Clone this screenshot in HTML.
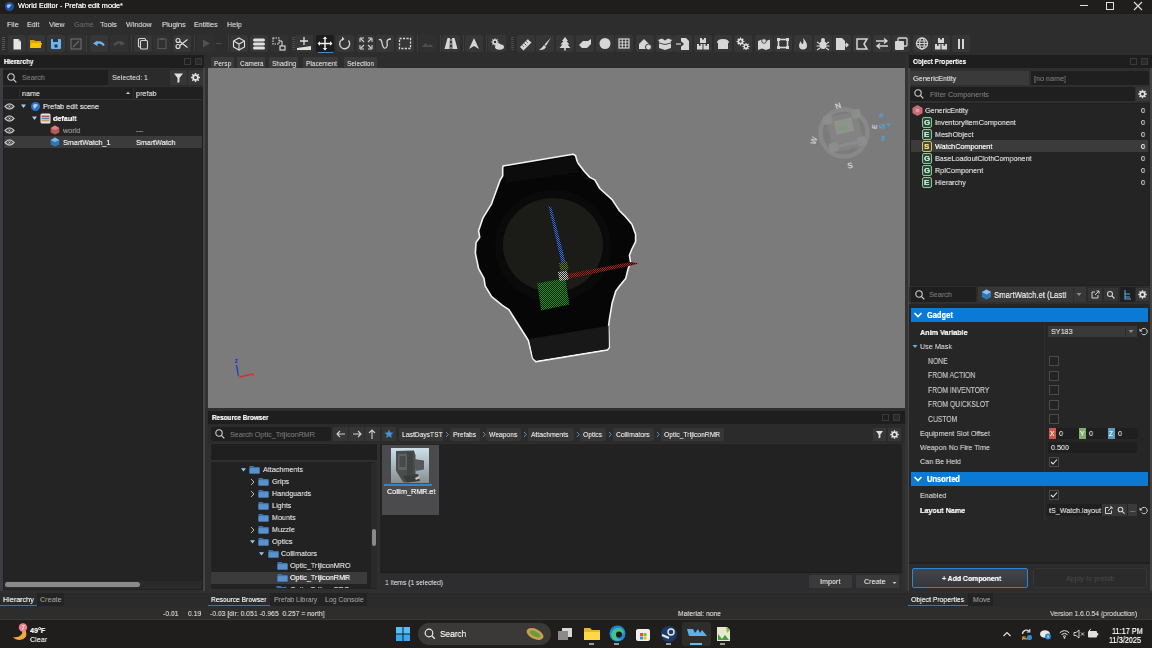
<!DOCTYPE html>
<html><head><meta charset="utf-8">
<style>
*{margin:0;padding:0;box-sizing:border-box}
html,body{width:1152px;height:648px;overflow:hidden;background:#2b2b2b;font-family:"Liberation Sans",sans-serif;font-size:8px;color:#cfcfcf}
.a{position:absolute}
.t{position:absolute;white-space:nowrap;line-height:1;transform-origin:0 0;will-change:transform;text-shadow:0 0 0.4px currentColor}
</style></head>
<body>
<div class="a" style="left:0px;top:0px;width:1152px;height:14px;background:#1f1e1d;"></div>
<div class="a" style="left:0px;top:14px;width:1152px;height:41px;background:#2d2d2d;"></div>
<svg class="a" style="left:4px;top:1px;" width="11" height="11" viewBox="0 0 11 11"><circle cx="5.5" cy="5.5" r="4.6" fill="#1f4f9a"/><path d="M2.5 4.5 Q5 2.5 7.5 4 Q6 6 4 7.5 Z" fill="#9cc4f0"/></svg>
<div class="t" style="left:18px;top:2px;font-size:7.3px;color:#f2f2f2;font-weight:normal;">World Editor - Prefab edit mode*</div>
<div class="a" style="left:1080px;top:5px;width:8px;height:1px;background:#e0e0e0;"></div>
<div class="a" style="left:1106px;top:2px;width:8px;height:8px;background:transparent;border:1px solid #e0e0e0"></div>
<svg class="a" style="left:1133px;top:1px;" width="10" height="10" viewBox="0 0 10 10"><path d="M1 1 L9 9 M9 1 L1 9" stroke="#e0e0e0" stroke-width="1.1"/></svg>
<div class="t" style="left:7px;top:21px;font-size:8px;color:#c4c4c4;font-weight:normal;transform:scaleX(0.9);">File</div>
<div class="t" style="left:27px;top:21px;font-size:8px;color:#c4c4c4;font-weight:normal;transform:scaleX(0.9);">Edit</div>
<div class="t" style="left:49px;top:21px;font-size:8px;color:#c4c4c4;font-weight:normal;transform:scaleX(0.9);">View</div>
<div class="t" style="left:74px;top:21px;font-size:8px;color:#5e5e5e;font-weight:normal;transform:scaleX(0.9);">Game</div>
<div class="t" style="left:100px;top:21px;font-size:8px;color:#c4c4c4;font-weight:normal;transform:scaleX(0.9);">Tools</div>
<div class="t" style="left:126px;top:21px;font-size:8px;color:#c4c4c4;font-weight:normal;transform:scaleX(0.9);">Window</div>
<div class="t" style="left:162px;top:21px;font-size:8px;color:#c4c4c4;font-weight:normal;transform:scaleX(0.9);">Plugins</div>
<div class="t" style="left:194px;top:21px;font-size:8px;color:#c4c4c4;font-weight:normal;transform:scaleX(0.9);">Entities</div>
<div class="t" style="left:227px;top:21px;font-size:8px;color:#c4c4c4;font-weight:normal;transform:scaleX(0.9);">Help</div>
<div class="a" style="left:2px;top:37px;width:3px;height:1px;background:#555;"></div>
<div class="a" style="left:2px;top:39px;width:3px;height:1px;background:#555;"></div>
<div class="a" style="left:2px;top:41px;width:3px;height:1px;background:#555;"></div>
<div class="a" style="left:2px;top:43px;width:3px;height:1px;background:#555;"></div>
<div class="a" style="left:2px;top:45px;width:3px;height:1px;background:#555;"></div>
<div class="a" style="left:2px;top:47px;width:3px;height:1px;background:#555;"></div>
<div class="a" style="left:2px;top:49px;width:3px;height:1px;background:#555;"></div>
<div class="a" style="left:8px;top:35px;width:18px;height:17px;background:#363636;border-radius:2px"></div>
<svg class="a" style="left:8px;top:35px;" width="18" height="17" viewBox="0 0 18 17"><path d="M5.5 4h5l2.5 2.5v8h-7.5z" fill="#e6e6e6"/><path d="M10.5 4v2.5h2.5z" fill="#aaa"/></svg>
<div class="a" style="left:27px;top:35px;width:18px;height:17px;background:#363636;border-radius:2px"></div>
<svg class="a" style="left:27px;top:35px;" width="18" height="17" viewBox="0 0 18 17"><path d="M3 5h4l1 1h6v7H3z" fill="#d9a400"/><path d="M4 8h11l-1.5 5H3z" fill="#f5c400"/></svg>
<div class="a" style="left:47px;top:35px;width:18px;height:17px;background:#363636;border-radius:2px"></div>
<svg class="a" style="left:47px;top:35px;" width="18" height="17" viewBox="0 0 18 17"><rect x="4" y="4" width="10" height="10" rx="1" fill="#6fb4ee"/><rect x="6" y="4" width="5" height="3" fill="#1f3550"/><rect x="7.5" y="9.5" width="3" height="3" fill="#1f3550"/></svg>
<div class="a" style="left:67px;top:35px;width:18px;height:17px;background:#313131;border-radius:2px"></div>
<svg class="a" style="left:67px;top:35px;" width="18" height="17" viewBox="0 0 18 17"><rect x="4" y="4" width="10" height="10" fill="none" stroke="#6a6a6a" stroke-width="1.2"/><path d="M6 12L12 6" stroke="#6a6a6a" stroke-width="1.2"/></svg>
<div class="a" style="left:86px;top:35px;width:1px;height:17px;background:#3c3c3c;"></div>
<div class="a" style="left:90px;top:35px;width:18px;height:17px;background:#363636;border-radius:2px"></div>
<svg class="a" style="left:90px;top:35px;" width="18" height="17" viewBox="0 0 18 17"><path d="M6 8.5Q10.5 5.5 14 10.5" fill="none" stroke="#6fb4ee" stroke-width="2"/><path d="M3 8.5L7.5 5.5L7.5 11z" fill="#6fb4ee"/></svg>
<div class="a" style="left:110px;top:35px;width:18px;height:17px;background:#313131;border-radius:2px"></div>
<svg class="a" style="left:110px;top:35px;" width="18" height="17" viewBox="0 0 18 17"><path d="M12 8.5Q7.5 5.5 4 10.5" fill="none" stroke="#505050" stroke-width="2"/><path d="M15 8.5L10.5 5.5L10.5 11z" fill="#505050"/></svg>
<div class="a" style="left:131px;top:35px;width:1px;height:17px;background:#3c3c3c;"></div>
<div class="a" style="left:134px;top:35px;width:18px;height:17px;background:#363636;border-radius:2px"></div>
<svg class="a" style="left:134px;top:35px;" width="18" height="17" viewBox="0 0 18 17"><rect x="4.5" y="3.5" width="7" height="8.5" rx="1" fill="none" stroke="#d6d6d6" stroke-width="1.1"/><rect x="6.5" y="5.5" width="7" height="8.5" rx="1" fill="#363636" stroke="#d6d6d6" stroke-width="1.1"/></svg>
<div class="a" style="left:153px;top:35px;width:18px;height:17px;background:#313131;border-radius:2px"></div>
<svg class="a" style="left:153px;top:35px;" width="18" height="17" viewBox="0 0 18 17"><rect x="5" y="4" width="8" height="9.5" fill="none" stroke="#555" stroke-width="1.2"/><rect x="7" y="3" width="4" height="2" fill="#555"/></svg>
<div class="a" style="left:173px;top:35px;width:18px;height:17px;background:#363636;border-radius:2px"></div>
<svg class="a" style="left:173px;top:35px;" width="18" height="17" viewBox="0 0 18 17"><circle cx="5" cy="5.5" r="2" fill="none" stroke="#e0e0e0" stroke-width="1.1"/><circle cx="5" cy="11.5" r="2" fill="none" stroke="#e0e0e0" stroke-width="1.1"/><path d="M6.8 6.5L14.5 12.5M6.8 10.5L14.5 4.5" stroke="#e0e0e0" stroke-width="1.1"/></svg>
<div class="a" style="left:194px;top:35px;width:1px;height:17px;background:#3c3c3c;"></div>
<div class="a" style="left:197px;top:35px;width:18px;height:17px;background:#303030;border-radius:2px"></div>
<svg class="a" style="left:197px;top:35px;" width="18" height="17" viewBox="0 0 18 17"><path d="M6 4.5l7 4l-7 4z" fill="#505050"/></svg>
<div class="a" style="left:216px;top:43px;width:5px;height:1px;background:#505050;"></div>
<div class="a" style="left:228px;top:35px;width:1px;height:17px;background:#3c3c3c;"></div>
<div class="a" style="left:230px;top:35px;width:18px;height:17px;background:#363636;border-radius:2px"></div>
<svg class="a" style="left:230px;top:35px;" width="18" height="17" viewBox="0 0 18 17"><path d="M9 3l5.5 3v6L9 15l-5.5-3V6z M3.5 6L9 9l5.5-3 M9 9v6" fill="none" stroke="#e0e0e0" stroke-width="1.1"/></svg>
<div class="a" style="left:250px;top:35px;width:18px;height:17px;background:#363636;border-radius:2px"></div>
<svg class="a" style="left:250px;top:35px;" width="18" height="17" viewBox="0 0 18 17"><rect x="3" y="3.5" width="12" height="3" rx="1.5" fill="#e0e0e0"/><rect x="3" y="7.5" width="12" height="3" rx="1.5" fill="#e0e0e0"/><rect x="3" y="11.5" width="12" height="3" rx="1.5" fill="#e0e0e0"/></svg>
<div class="a" style="left:270px;top:35px;width:18px;height:17px;background:#313131;border-radius:2px"></div>
<svg class="a" style="left:270px;top:35px;" width="18" height="17" viewBox="0 0 18 17"><rect x="3" y="3" width="6" height="6" fill="none" stroke="#e0e0e0" stroke-width="1.1" stroke-dasharray="1.5 1"/><path d="M9 6h3v5" stroke="#e0e0e0" stroke-width="1" fill="none"/><rect x="10" y="11" width="5" height="4" fill="none" stroke="#e0e0e0" stroke-width="1.1"/></svg>
<div class="a" style="left:292px;top:37px;width:3px;height:1px;background:#4a4a4a;"></div>
<div class="a" style="left:292px;top:39px;width:3px;height:1px;background:#4a4a4a;"></div>
<div class="a" style="left:292px;top:41px;width:3px;height:1px;background:#4a4a4a;"></div>
<div class="a" style="left:292px;top:43px;width:3px;height:1px;background:#4a4a4a;"></div>
<div class="a" style="left:292px;top:45px;width:3px;height:1px;background:#4a4a4a;"></div>
<div class="a" style="left:292px;top:47px;width:3px;height:1px;background:#4a4a4a;"></div>
<div class="a" style="left:292px;top:49px;width:3px;height:1px;background:#4a4a4a;"></div>
<div class="a" style="left:295px;top:35px;width:18px;height:17px;background:#363636;border-radius:2px"></div>
<svg class="a" style="left:295px;top:35px;" width="18" height="17" viewBox="0 0 18 17"><path d="M9 2v8M5 6h8" stroke="#e0e0e0" stroke-width="1.3"/><path d="M2 13 L16 11 L16 15 L2 15z" fill="#e0e0e0"/></svg>
<div class="a" style="left:316px;top:35px;width:18px;height:17px;background:#1c1c1c;border-radius:2px"></div>
<svg class="a" style="left:316px;top:35px;" width="18" height="17" viewBox="0 0 18 17"><path d="M9 2v13M2.5 8.5h13" stroke="#f0f0f0" stroke-width="1.4"/><path d="M9 1.5l-2.2 2.5h4.4zM9 15.5l-2.2-2.5h4.4zM1.5 8.5l2.5-2.2v4.4zM16.5 8.5l-2.5-2.2v4.4z" fill="#f0f0f0"/></svg>
<div class="a" style="left:318px;top:52px;width:15px;height:1px;background:#3d8fd6;"></div>
<div class="a" style="left:336px;top:35px;width:18px;height:17px;background:#363636;border-radius:2px"></div>
<svg class="a" style="left:336px;top:35px;" width="18" height="17" viewBox="0 0 18 17"><path d="M12.5 5.5 A5 5 0 1 1 7 4" fill="none" stroke="#d6d6d6" stroke-width="1.3"/><path d="M6 1.5l2.5 2.5l-2.5 2z" fill="#d6d6d6"/></svg>
<div class="a" style="left:357px;top:35px;width:18px;height:17px;background:#363636;border-radius:2px"></div>
<svg class="a" style="left:357px;top:35px;" width="18" height="17" viewBox="0 0 18 17"><path d="M3 3h4M3 3v4M15 3h-4M15 3v4M3 14h4M3 14v-4M15 14h-4M15 14v-4M4 4l3 3M14 4l-3 3M4 13l3-3M14 13l-3-3" stroke="#d6d6d6" stroke-width="1.1" fill="none"/></svg>
<div class="a" style="left:376px;top:35px;width:18px;height:17px;background:#363636;border-radius:2px"></div>
<svg class="a" style="left:376px;top:35px;" width="18" height="17" viewBox="0 0 18 17"><path d="M3 5 Q5 3 6 8 Q7 14 9.5 13 Q12 12 11 7 Q11 4 15 4" fill="none" stroke="#d6d6d6" stroke-width="1.3"/></svg>
<div class="a" style="left:396px;top:35px;width:18px;height:17px;background:#363636;border-radius:2px"></div>
<svg class="a" style="left:396px;top:35px;" width="18" height="17" viewBox="0 0 18 17"><rect x="3.5" y="3.5" width="11" height="10" fill="none" stroke="#d6d6d6" stroke-width="1.3" stroke-dasharray="2.2 1.3"/></svg>
<div class="a" style="left:417px;top:35px;width:1px;height:17px;background:#3c3c3c;"></div>
<div class="a" style="left:419px;top:35px;width:18px;height:17px;background:#303030;border-radius:2px"></div>
<svg class="a" style="left:419px;top:35px;" width="18" height="17" viewBox="0 0 18 17"><path d="M3 12l3.5-4l2.5 3l2-2l3.5 3z" fill="#505050"/></svg>
<div class="a" style="left:440px;top:35px;width:1px;height:17px;background:#3c3c3c;"></div>
<div class="a" style="left:442px;top:35px;width:18px;height:17px;background:#363636;border-radius:2px"></div>
<svg class="a" style="left:442px;top:35px;" width="18" height="17" viewBox="0 0 18 17"><path d="M5.5 3h2.5l-0.5 11H2.5z M10 3h2.5l3 11h-5z" fill="#d6d6d6"/><path d="M9 4v2M9 8v2M9 12v2" stroke="#d6d6d6" stroke-width="0.9"/></svg>
<div class="a" style="left:463px;top:35px;width:1px;height:17px;background:#3c3c3c;"></div>
<div class="a" style="left:465px;top:35px;width:18px;height:17px;background:#363636;border-radius:2px"></div>
<svg class="a" style="left:465px;top:35px;" width="18" height="17" viewBox="0 0 18 17"><path d="M9 3l5 11l-5-3l-5 3z" fill="#d6d6d6"/></svg>
<div class="a" style="left:486px;top:35px;width:1px;height:17px;background:#3c3c3c;"></div>
<div class="a" style="left:488px;top:35px;width:18px;height:17px;background:#363636;border-radius:2px"></div>
<svg class="a" style="left:488px;top:35px;" width="18" height="17" viewBox="0 0 18 17"><path d="M9.53 6.39 L10.56 6.46 L10.56 7.54 L9.53 7.61 L9.22 8.35 L9.90 9.13 L9.13 9.90 L8.35 9.22 L7.61 9.53 L7.54 10.56 L6.46 10.56 L6.39 9.53 L5.65 9.22 L4.87 9.90 L4.10 9.13 L4.78 8.35 L4.47 7.61 L3.44 7.54 L3.44 6.46 L4.47 6.39 L4.78 5.65 L4.10 4.87 L4.87 4.10 L5.65 4.78 L6.39 4.47 L6.46 3.44 L7.54 3.44 L7.61 4.47 L8.35 4.78 L9.13 4.10 L9.90 4.87 L9.22 5.65Z" fill="#e0e0e0"/><circle cx="7" cy="7" r="1.3" fill="#363636"/><ellipse cx="11.5" cy="12" rx="4.5" ry="2.8" fill="#d6d6d6"/><circle cx="10" cy="10.5" r="2.5" fill="#d6d6d6"/></svg>
<div class="a" style="left:511px;top:37px;width:3px;height:1px;background:#4a4a4a;"></div>
<div class="a" style="left:511px;top:39px;width:3px;height:1px;background:#4a4a4a;"></div>
<div class="a" style="left:511px;top:41px;width:3px;height:1px;background:#4a4a4a;"></div>
<div class="a" style="left:511px;top:43px;width:3px;height:1px;background:#4a4a4a;"></div>
<div class="a" style="left:511px;top:45px;width:3px;height:1px;background:#4a4a4a;"></div>
<div class="a" style="left:511px;top:47px;width:3px;height:1px;background:#4a4a4a;"></div>
<div class="a" style="left:511px;top:49px;width:3px;height:1px;background:#4a4a4a;"></div>
<div class="a" style="left:517px;top:35px;width:18px;height:17px;background:#363636;border-radius:2px"></div>
<svg class="a" style="left:517px;top:35px;" width="18" height="17" viewBox="0 0 18 17"><path d="M3 12l8-8l3.5 3.5l-8 8z" fill="#d6d6d6"/><path d="M5.5 10.5l1.2 1.2M7.5 8.5l1.8 1.8M9.5 6.5l1.2 1.2M11.5 4.5l1.8 1.8" stroke="#363636" stroke-width="0.9"/></svg>
<div class="a" style="left:536px;top:35px;width:18px;height:17px;background:#363636;border-radius:2px"></div>
<svg class="a" style="left:536px;top:35px;" width="18" height="17" viewBox="0 0 18 17"><path d="M15 2.5l-6.5 7l1.5 1.5z" fill="#d6d6d6"/><path d="M8 10l2 2Q8.5 15.5 3 15Q5.5 13.5 8 10" fill="#d6d6d6"/></svg>
<div class="a" style="left:556px;top:35px;width:18px;height:17px;background:#363636;border-radius:2px"></div>
<svg class="a" style="left:556px;top:35px;" width="18" height="17" viewBox="0 0 18 17"><path d="M9 2l3 4h-1.5l3 3.5h-2l3 3.5h-11l3-3.5h-2l3-3.5h-1.5z" fill="#d6d6d6"/><rect x="8.2" y="13" width="1.6" height="2.5" fill="#d6d6d6"/></svg>
<div class="a" style="left:576px;top:35px;width:18px;height:17px;background:#363636;border-radius:2px"></div>
<svg class="a" style="left:576px;top:35px;" width="18" height="17" viewBox="0 0 18 17"><path d="M3 10l4-4h5l3-2v5l-4 4H6z" fill="#d6d6d6"/></svg>
<div class="a" style="left:596px;top:35px;width:18px;height:17px;background:#363636;border-radius:2px"></div>
<svg class="a" style="left:596px;top:35px;" width="18" height="17" viewBox="0 0 18 17"><circle cx="9" cy="8.5" r="5.5" fill="#d6d6d6"/></svg>
<div class="a" style="left:615px;top:35px;width:18px;height:17px;background:#363636;border-radius:2px"></div>
<svg class="a" style="left:615px;top:35px;" width="18" height="17" viewBox="0 0 18 17"><rect x="4" y="4" width="10" height="9" fill="none" stroke="#d6d6d6" stroke-width="1.2"/><path d="M7.3 4v9M10.7 4v9M4 7h10M4 10h10" stroke="#d6d6d6" stroke-width="1"/></svg>
<div class="a" style="left:636px;top:35px;width:18px;height:17px;background:#363636;border-radius:2px"></div>
<svg class="a" style="left:636px;top:35px;" width="18" height="17" viewBox="0 0 18 17"><path d="M3 9l5-5l5 5v5H3z" fill="#d6d6d6"/><circle cx="12.5" cy="12" r="3" fill="#d6d6d6" stroke="#363636" stroke-width="1"/></svg>
<div class="a" style="left:656px;top:35px;width:18px;height:17px;background:#363636;border-radius:2px"></div>
<svg class="a" style="left:656px;top:35px;" width="18" height="17" viewBox="0 0 18 17"><path d="M3 7h12v6l-6 2l-6-2z" fill="#d6d6d6"/><path d="M2 5l4-1.5l3 2l3-2l4 1.5l-2 2.5h-10z" fill="#d6d6d6"/><path d="M3 8l6 1.5l6-1.5" stroke="#363636" stroke-width="0.9" fill="none"/></svg>
<div class="a" style="left:674px;top:35px;width:18px;height:17px;background:#363636;border-radius:2px"></div>
<svg class="a" style="left:674px;top:35px;" width="18" height="17" viewBox="0 0 18 17"><path d="M7 3h5l3 3v9H7z" fill="#d6d6d6"/><path d="M2 9h7M7 7l2 2l-2 2" stroke="#363636" stroke-width="1.4" fill="none"/><path d="M2 9h5" stroke="#d6d6d6" stroke-width="1.2"/></svg>
<div class="a" style="left:694px;top:35px;width:18px;height:17px;background:#363636;border-radius:2px"></div>
<svg class="a" style="left:694px;top:35px;" width="18" height="17" viewBox="0 0 18 17"><rect x="6" y="3" width="6" height="5" fill="#d6d6d6"/><rect x="8" y="2" width="2" height="2.5" fill="#363636"/><rect x="3" y="9" width="5.5" height="5.5" fill="#d6d6d6"/><rect x="5" y="8.5" width="1.6" height="2.3" fill="#363636"/><rect x="9.5" y="9" width="5.5" height="5.5" fill="#d6d6d6"/><rect x="11.5" y="8.5" width="1.6" height="2.3" fill="#363636"/></svg>
<div class="a" style="left:714px;top:35px;width:18px;height:17px;background:#363636;border-radius:2px"></div>
<svg class="a" style="left:714px;top:35px;" width="18" height="17" viewBox="0 0 18 17"><path d="M3 8Q3 4 9 4Q15 4 15 8L14 8v6H4V8z" fill="#d6d6d6"/></svg>
<div class="a" style="left:734px;top:35px;width:18px;height:17px;background:#363636;border-radius:2px"></div>
<svg class="a" style="left:734px;top:35px;" width="18" height="17" viewBox="0 0 18 17"><path d="M9.22 5.84 L10.45 5.90 L10.45 7.10 L9.22 7.16 L8.89 7.96 L9.72 8.87 L8.87 9.72 L7.96 8.89 L7.16 9.22 L7.10 10.45 L5.90 10.45 L5.84 9.22 L5.04 8.89 L4.13 9.72 L3.28 8.87 L4.11 7.96 L3.78 7.16 L2.55 7.10 L2.55 5.90 L3.78 5.84 L4.11 5.04 L3.28 4.13 L4.13 3.28 L5.04 4.11 L5.84 3.78 L5.90 2.55 L7.10 2.55 L7.16 3.78 L7.96 4.11 L8.87 3.28 L9.72 4.13 L8.89 5.04Z" fill="#e0e0e0"/><circle cx="6.5" cy="6.5" r="1.2" fill="#363636"/><path d="M14.43 10.91 L15.56 10.96 L15.56 12.04 L14.43 12.09 L14.13 12.80 L14.90 13.63 L14.13 14.40 L13.30 13.63 L12.59 13.93 L12.54 15.06 L11.46 15.06 L11.41 13.93 L10.70 13.63 L9.87 14.40 L9.10 13.63 L9.87 12.80 L9.57 12.09 L8.44 12.04 L8.44 10.96 L9.57 10.91 L9.87 10.20 L9.10 9.37 L9.87 8.60 L10.70 9.37 L11.41 9.07 L11.46 7.94 L12.54 7.94 L12.59 9.07 L13.30 9.37 L14.13 8.60 L14.90 9.37 L14.13 10.20Z" fill="#e0e0e0"/><circle cx="12" cy="11.5" r="1.1" fill="#363636"/></svg>
<div class="a" style="left:755px;top:35px;width:18px;height:17px;background:#363636;border-radius:2px"></div>
<svg class="a" style="left:755px;top:35px;" width="18" height="17" viewBox="0 0 18 17"><path d="M3 6l4-1.5l4 1.5l4-1.5v9l-4 1.5l-4-1.5l-4 1.5z" fill="#d6d6d6"/><circle cx="9" cy="6" r="2.3" fill="#d6d6d6" stroke="#363636" stroke-width="0.8"/></svg>
<div class="a" style="left:774px;top:35px;width:18px;height:17px;background:#363636;border-radius:2px"></div>
<svg class="a" style="left:774px;top:35px;" width="18" height="17" viewBox="0 0 18 17"><rect x="4.5" y="4.5" width="9" height="8" fill="none" stroke="#d6d6d6" stroke-width="1.6"/><rect x="3" y="3" width="3" height="3" fill="#d6d6d6"/><rect x="12" y="3" width="3" height="3" fill="#d6d6d6"/><rect x="3" y="11" width="3" height="3" fill="#d6d6d6"/><rect x="12" y="11" width="3" height="3" fill="#d6d6d6"/></svg>
<div class="a" style="left:794px;top:35px;width:18px;height:17px;background:#363636;border-radius:2px"></div>
<svg class="a" style="left:794px;top:35px;" width="18" height="17" viewBox="0 0 18 17"><path d="M9 3Q13 7 13 10.5A4 4 0 0 1 5 10.5Q5 8 7 6Q7 9 9 9Q10 6 9 3z" fill="#d6d6d6"/></svg>
<div class="a" style="left:814px;top:35px;width:18px;height:17px;background:#363636;border-radius:2px"></div>
<svg class="a" style="left:814px;top:35px;" width="18" height="17" viewBox="0 0 18 17"><ellipse cx="9" cy="10" rx="3.5" ry="4" fill="#d6d6d6"/><circle cx="9" cy="5" r="2" fill="#d6d6d6"/><path d="M3 7l3 2M15 7l-3 2M2.5 11h4M15.5 11h-4M3 15l3-2M15 15l-3-2" stroke="#d6d6d6" stroke-width="1.1"/></svg>
<div class="a" style="left:833px;top:35px;width:18px;height:17px;background:#363636;border-radius:2px"></div>
<svg class="a" style="left:833px;top:35px;" width="18" height="17" viewBox="0 0 18 17"><path d="M3 3h6l3 3v9H3z" fill="#d6d6d6"/><path d="M9 10h6M13 8l2 2l-2 2" stroke="#d6d6d6" stroke-width="1.3" fill="none"/></svg>
<div class="a" style="left:853px;top:35px;width:18px;height:17px;background:#363636;border-radius:2px"></div>
<svg class="a" style="left:853px;top:35px;" width="18" height="17" viewBox="0 0 18 17"><path d="M4 4h10l-3 5l3 5H4z" fill="none" stroke="#d6d6d6" stroke-width="1.5"/></svg>
<div class="a" style="left:873px;top:35px;width:18px;height:17px;background:#363636;border-radius:2px"></div>
<svg class="a" style="left:873px;top:35px;" width="18" height="17" viewBox="0 0 18 17"><path d="M3 6h11M11 3.5l3 2.5l-3 2.5M15 11H4M7 8.5L4 11l3 2.5" stroke="#d6d6d6" stroke-width="1.4" fill="none"/></svg>
<div class="a" style="left:892px;top:35px;width:18px;height:17px;background:#363636;border-radius:2px"></div>
<svg class="a" style="left:892px;top:35px;" width="18" height="17" viewBox="0 0 18 17"><rect x="6" y="3" width="9" height="8" rx="1" fill="none" stroke="#d6d6d6" stroke-width="1.3"/><rect x="3" y="6" width="9" height="9" rx="1" fill="#d6d6d6"/></svg>
<div class="a" style="left:913px;top:35px;width:18px;height:17px;background:#363636;border-radius:2px"></div>
<svg class="a" style="left:913px;top:35px;" width="18" height="17" viewBox="0 0 18 17"><circle cx="9" cy="8.5" r="5.5" fill="none" stroke="#d6d6d6" stroke-width="1.3"/><ellipse cx="9" cy="8.5" rx="2.3" ry="5.5" fill="none" stroke="#d6d6d6" stroke-width="1.1"/><path d="M3.5 8.5h11M4.5 6h9M4.5 11h9" stroke="#d6d6d6" stroke-width="1"/></svg>
<div class="a" style="left:932px;top:35px;width:18px;height:17px;background:#363636;border-radius:2px"></div>
<svg class="a" style="left:932px;top:35px;" width="18" height="17" viewBox="0 0 18 17"><rect x="6" y="3" width="6" height="5" fill="#d6d6d6"/><rect x="8" y="2" width="2" height="2.5" fill="#363636"/><rect x="3" y="9" width="5.5" height="5.5" fill="#d6d6d6"/><rect x="5" y="8.5" width="1.6" height="2.3" fill="#363636"/><rect x="9.5" y="9" width="5.5" height="5.5" fill="#d6d6d6"/><rect x="11.5" y="8.5" width="1.6" height="2.3" fill="#363636"/></svg>
<div class="a" style="left:952px;top:35px;width:18px;height:17px;background:#363636;border-radius:2px"></div>
<svg class="a" style="left:952px;top:35px;" width="18" height="17" viewBox="0 0 18 17"><rect x="6" y="4" width="2" height="10" fill="#d6d6d6"/><rect x="10" y="4" width="2" height="10" fill="#d6d6d6"/></svg>
<div class="a" style="left:0px;top:55px;width:208px;height:538px;background:#2f2f2f;"></div>
<div class="a" style="left:0px;top:55px;width:204px;height:13px;background:#1e1e1e;"></div>
<div class="t" style="left:4px;top:58px;font-size:7px;color:#f0f0f0;font-weight:bold;transform:scaleX(0.91);">Hierarchy</div>
<div class="a" style="left:184px;top:58px;width:7px;height:7px;background:transparent;border:1px solid #3a3a3a"></div>
<div class="a" style="left:195px;top:58px;width:7px;height:7px;background:#2a2a2a;border:1px solid #3a3a3a"></div>
<div class="a" style="left:3px;top:69px;width:200px;height:17px;background:#2b2b2b;"></div>
<div class="a" style="left:3px;top:70px;width:105px;height:15px;background:#1f1f1f;"></div>
<svg class="a" style="left:6px;top:72px;" width="12" height="12" viewBox="0 0 12 12"><circle cx="5" cy="5" r="3.2" fill="none" stroke="#cfcfcf" stroke-width="1.1"/><path d="M7.3 7.3l3 3" stroke="#cfcfcf" stroke-width="1.2"/></svg>
<div class="t" style="left:22px;top:74px;font-size:8px;color:#6f6f6f;font-weight:normal;transform:scaleX(0.9);">Search</div>
<div class="t" style="left:112px;top:74px;font-size:8px;color:#bdbdbd;font-weight:normal;transform:scaleX(0.9);">Selected: 1</div>
<div class="a" style="left:170px;top:70px;width:17px;height:15px;background:#363636;"></div>
<svg class="a" style="left:170px;top:70px;" width="17" height="15" viewBox="0 0 17 15"><path d="M4 3.5h9l-3.5 4.5v4l-2 1v-5z" fill="#e0e0e0"/></svg>
<div class="a" style="left:188px;top:70px;width:15px;height:15px;background:#363636;"></div>
<svg class="a" style="left:188px;top:70px;" width="15" height="15" viewBox="0 0 15 15"><path d="M10.71 6.72 L12.05 6.81 L12.05 8.19 L10.71 8.28 L10.32 9.22 L11.21 10.23 L10.23 11.21 L9.22 10.32 L8.28 10.71 L8.19 12.05 L6.81 12.05 L6.72 10.71 L5.78 10.32 L4.77 11.21 L3.79 10.23 L4.68 9.22 L4.29 8.28 L2.95 8.19 L2.95 6.81 L4.29 6.72 L4.68 5.78 L3.79 4.77 L4.77 3.79 L5.78 4.68 L6.72 4.29 L6.81 2.95 L8.19 2.95 L8.28 4.29 L9.22 4.68 L10.23 3.79 L11.21 4.77 L10.32 5.78Z" fill="#e0e0e0"/><circle cx="7.5" cy="7.5" r="1.5" fill="#363636"/></svg>
<div class="a" style="left:3px;top:87px;width:200px;height:503px;background:#242424;border:1.5px solid #202022"></div>
<div class="a" style="left:0px;top:68px;width:3px;height:523px;background:#3d3d41;"></div>
<div class="a" style="left:203px;top:68px;width:1.5px;height:523px;background:#454545;"></div>
<div class="a" style="left:204.5px;top:68px;width:3.5px;height:523px;background:#333333;"></div>
<div class="a" style="left:4px;top:88px;width:198px;height:12px;background:#202020;"></div>
<div class="a" style="left:4px;top:99px;width:198px;height:1px;background:#333;"></div>
<div class="a" style="left:19px;top:88px;width:1px;height:12px;background:#2c2c2c;"></div>
<div class="a" style="left:133px;top:88px;width:1px;height:12px;background:#2c2c2c;"></div>
<div class="t" style="left:22px;top:90px;font-size:8px;color:#cfcfcf;font-weight:normal;transform:scaleX(0.9);">name</div>
<svg class="a" style="left:125px;top:90px;" width="6" height="6" viewBox="0 0 6 6"><path d="M1 4l2-2.2l2 2.2z" fill="#cfcfcf"/></svg>
<div class="t" style="left:136px;top:90px;font-size:8px;color:#cfcfcf;font-weight:normal;transform:scaleX(0.9);">prefab</div>
<div class="a" style="left:4px;top:136px;width:198px;height:12px;background:#3b3b3c;"></div>
<svg class="a" style="left:4px;top:102.0px;" width="11" height="9" viewBox="0 0 11 9"><path d="M1 4.5Q5.5 -0.8 10 4.5Q5.5 9.8 1 4.5z" fill="none" stroke="#c4c4c4" stroke-width="1.2"/><circle cx="5.5" cy="4.5" r="1.6" fill="none" stroke="#9a9a9a" stroke-width="0.8"/><circle cx="5.5" cy="4.5" r="0.7" fill="#d0d0d0"/></svg>
<svg class="a" style="left:4px;top:114.0px;" width="11" height="9" viewBox="0 0 11 9"><path d="M1 4.5Q5.5 -0.8 10 4.5Q5.5 9.8 1 4.5z" fill="none" stroke="#c4c4c4" stroke-width="1.2"/><circle cx="5.5" cy="4.5" r="1.6" fill="none" stroke="#9a9a9a" stroke-width="0.8"/><circle cx="5.5" cy="4.5" r="0.7" fill="#d0d0d0"/></svg>
<svg class="a" style="left:4px;top:126.0px;" width="11" height="9" viewBox="0 0 11 9"><path d="M1 4.5Q5.5 -0.8 10 4.5Q5.5 9.8 1 4.5z" fill="none" stroke="#c4c4c4" stroke-width="1.2"/><circle cx="5.5" cy="4.5" r="1.6" fill="none" stroke="#9a9a9a" stroke-width="0.8"/><circle cx="5.5" cy="4.5" r="0.7" fill="#d0d0d0"/></svg>
<svg class="a" style="left:4px;top:138.0px;" width="11" height="9" viewBox="0 0 11 9"><path d="M1 4.5Q5.5 -0.8 10 4.5Q5.5 9.8 1 4.5z" fill="none" stroke="#c4c4c4" stroke-width="1.2"/><circle cx="5.5" cy="4.5" r="1.6" fill="none" stroke="#9a9a9a" stroke-width="0.8"/><circle cx="5.5" cy="4.5" r="0.7" fill="#d0d0d0"/></svg>
<svg class="a" style="left:20px;top:103px;" width="7" height="7" viewBox="0 0 7 7"><path d="M1 1.5h5l-2.5 3.5z" fill="#a8d0e6"/></svg>
<svg class="a" style="left:30px;top:101px;" width="11" height="11" viewBox="0 0 11 11"><circle cx="5.5" cy="5.5" r="4.5" fill="#2e72c8"/><path d="M3 4Q5.5 2 8 4Q6 6.5 4 8z" fill="#a8d0f5"/></svg>
<div class="t" style="left:43px;top:102.5px;font-size:8px;color:#d8d8d8;font-weight:normal;transform:scaleX(0.9);">Prefab edit scene</div>
<svg class="a" style="left:31px;top:115px;" width="7" height="7" viewBox="0 0 7 7"><path d="M1 1.5h5l-2.5 3.5z" fill="#a8d0e6"/></svg>
<svg class="a" style="left:40px;top:113px;" width="11" height="11" viewBox="0 0 11 11"><rect x="0.5" y="0.5" width="10" height="10" rx="1.5" fill="#e6e6e6"/><rect x="1.5" y="2.5" width="8" height="1.6" fill="#c94c4c"/><rect x="1.5" y="4.7" width="8" height="1.6" fill="#4c7fc9"/><rect x="1.5" y="6.9" width="8" height="1.6" fill="#c9a14c"/></svg>
<div class="t" style="left:53px;top:114.5px;font-size:8px;color:#f4f4f4;font-weight:bold;transform:scaleX(0.9);">default</div>
<svg class="a" style="left:50px;top:125px;" width="10" height="10" viewBox="0 0 10 10"><path d="M5 0.5l4.3 2.4v4.6L5 9.5L0.7 7.5V2.9z" fill="#b55a5a"/><path d="M5 0.5l4.3 2.4L5 5L0.7 2.9z" fill="#d98080"/></svg>
<div class="t" style="left:63px;top:126.5px;font-size:8px;color:#8c8c8c;font-weight:normal;transform:scaleX(0.9);">world</div>
<div class="t" style="left:136px;top:126.5px;font-size:8px;color:#9a9a9a;font-weight:normal;transform:scaleX(0.9);">---</div>
<svg class="a" style="left:50px;top:137px;" width="10" height="10" viewBox="0 0 10 10"><path d="M5 0.5l4.3 2.4v4.6L5 9.5L0.7 7.5V2.9z" fill="#2f78b8"/><path d="M5 0.5l4.3 2.4L5 5L0.7 2.9z" fill="#7ab8e8"/></svg>
<div class="t" style="left:63px;top:138.5px;font-size:8px;color:#e6e6e6;font-weight:normal;transform:scaleX(0.9);">SmartWatch_1</div>
<div class="t" style="left:136px;top:138.5px;font-size:8px;color:#e6e6e6;font-weight:normal;transform:scaleX(0.9);">SmartWatch</div>
<div class="a" style="left:4px;top:581px;width:198px;height:8px;background:#2a2a2a;"></div>
<div class="a" style="left:5px;top:582px;width:135px;height:5px;background:#8a8a8a;border-radius:3px"></div>
<div class="a" style="left:0px;top:593px;width:37px;height:13px;background:#2b2b2b;"></div>
<div class="t" style="left:3px;top:596px;font-size:8px;color:#e6e6e6;font-weight:normal;transform:scaleX(0.9);">Hierarchy</div>
<div class="a" style="left:0px;top:604.5px;width:37px;height:1.5px;background:#2a7ac6;"></div>
<div class="a" style="left:37px;top:593px;width:27px;height:13px;background:#232323;"></div>
<div class="t" style="left:40px;top:596px;font-size:8px;color:#8a8a8a;font-weight:normal;transform:scaleX(0.9);">Create</div>
<div class="a" style="left:204px;top:55px;width:701px;height:13px;background:#2d2d2d;"></div>
<div class="a" style="left:211px;top:57px;width:23px;height:11px;background:#3a3a3a;border-radius:1px"></div>
<div class="t" style="left:213.5px;top:59.5px;font-size:8px;color:#c8c8c8;font-weight:normal;transform:scaleX(0.82);">Persp</div>
<div class="a" style="left:237px;top:57px;width:28px;height:11px;background:#3a3a3a;border-radius:1px"></div>
<div class="t" style="left:239.5px;top:59.5px;font-size:8px;color:#c8c8c8;font-weight:normal;transform:scaleX(0.82);">Camera</div>
<div class="a" style="left:269px;top:57px;width:29px;height:11px;background:#3a3a3a;border-radius:1px"></div>
<div class="t" style="left:271.5px;top:59.5px;font-size:8px;color:#c8c8c8;font-weight:normal;transform:scaleX(0.82);">Shading</div>
<div class="a" style="left:303px;top:57px;width:35px;height:11px;background:#3a3a3a;border-radius:1px"></div>
<div class="t" style="left:305.5px;top:59.5px;font-size:8px;color:#c8c8c8;font-weight:normal;transform:scaleX(0.82);">Placement</div>
<div class="a" style="left:344px;top:57px;width:33px;height:11px;background:#3a3a3a;border-radius:1px"></div>
<div class="t" style="left:346.5px;top:59.5px;font-size:8px;color:#c8c8c8;font-weight:normal;transform:scaleX(0.82);">Selection</div>
<div class="a" style="left:208px;top:68px;width:697px;height:340px;background:#7b7b7b;"></div>
<svg class="a" style="left:208px;top:68px;" width="697" height="340" viewBox="0 0 697 340"><defs><pattern id="pg" width="2" height="2" patternUnits="userSpaceOnUse"><rect width="2" height="2" fill="#0a200a"/><rect width="1" height="1" fill="#2a8a2a"/><rect x="1" y="1" width="1" height="1" fill="#2a8a2a"/></pattern><pattern id="pb" width="2" height="2" patternUnits="userSpaceOnUse"><rect width="2" height="2" fill="#101830"/><rect width="1" height="1" fill="#3e6ee0"/><rect x="1" y="1" width="1" height="1" fill="#3e6ee0"/></pattern><pattern id="pr" width="2" height="2" patternUnits="userSpaceOnUse"><rect width="2" height="2" fill="#200808"/><rect width="1" height="1" fill="#9a2818"/><rect x="1" y="1" width="1" height="1" fill="#9a2818"/></pattern><pattern id="pw" width="2" height="2" patternUnits="userSpaceOnUse"><rect width="2" height="2" fill="#202020"/><rect width="1" height="1" fill="#c8c8c0"/><rect x="1" y="1" width="1" height="1" fill="#c8c8c0"/></pattern><pattern id="po" width="2" height="2" patternUnits="userSpaceOnUse"><rect width="2" height="2" fill="#141a0a"/><rect width="1" height="1" fill="#5a7a2a"/><rect x="1" y="1" width="1" height="1" fill="#5a7a2a"/></pattern></defs><g transform="translate(-208,-68)"><path d="M503 166 L573 154.3 L575.5 155.5 L577.5 162.5 L584 171 L589.9 177.4 L594.8 179.9 L599.8 188.5 L612.1 199.6 L619.5 210.7 L625.7 216.9 L631.9 224.3 L635.6 234.2 L635.6 241.6 L631.9 249 L629.4 255.2 L630.6 262.6 L628.1 268.8 L625.7 278.6 L619.5 286 L615.8 291 L612.1 303.3 L609.6 318.1 L608.6 325.8 L609.3 347.4 L607.4 349.9 L535.8 361.6 L532.7 358.5 L528.4 340.6 L526.5 337.5 L515.4 320 L508.9 309.6 L502.4 305.3 L491.6 296.6 L485.1 285.8 L484 278.3 L478.6 268.6 L475.4 253.4 L476 242.6 L479.7 237.2 L478.6 230.8 L483 217.8 L491.6 203.8 L492.7 200.5 L500.2 180 L502.7 175.9 L502.7 168.5 Z" fill="#060606" stroke="#f4f4f4" stroke-width="1.6" stroke-linejoin="round"/><path d="M504 168 L573 156.5 L577 163 L579 172 L506 183z" fill="#0c0c0c"/><path d="M529.5 339 L608.6 325.8 L608.8 347 L607 349 L536 360.5 L533 358z" fill="#181818"/><ellipse cx="553" cy="246" rx="58" ry="56" fill="#0a0a0a"/><ellipse cx="553" cy="245" rx="50" ry="47" fill="#1b1c18"/><path d="M548.5 206 L551.5 207.5 L566 264 L562 265z" fill="url(#pb)"/><path d="M567 274 L631 262 L638.5 263.5 L631 265.5 L568 279z" fill="url(#pr)"/><path d="M537.2 283.3 L565.3 278.3 L569.3 304.4 L541.2 310.4z" fill="url(#pg)"/><path d="M559 263 L567 261.5 L568.5 269.5 L560.5 271z" fill="url(#po)"/><path d="M558 272 L567 270.5 L568.5 279.5 L559.5 281z" fill="url(#pw)"/></g></svg>
<svg class="a" style="left:800px;top:92px;" width="100" height="85" viewBox="0 0 100 85"><g transform="translate(-800,-92)"><circle cx="844" cy="133" r="23.5" fill="none" stroke="#888888" stroke-width="4.5"/><g transform="rotate(-12 845 131)"><rect x="829" y="114" width="32" height="36" rx="5" fill="#838383"/><rect x="826" y="112" width="9" height="9" rx="2" fill="#8d8d8d"/><rect x="855" y="112" width="9" height="9" rx="2" fill="#8d8d8d"/><rect x="826" y="140" width="9" height="9" rx="2" fill="#8d8d8d"/><rect x="855" y="140" width="9" height="9" rx="2" fill="#8d8d8d"/><rect x="836" y="119" width="18" height="14" fill="#8e948c"/><text x="838" y="129" font-size="7" fill="#6aa06a" font-family="Liberation Sans">top</text><rect x="832" y="143" width="26" height="3" fill="#8c8c8c"/></g><text x="835" y="108" font-size="8" font-weight="bold" fill="#cfcfcf" font-family="Liberation Sans" transform="rotate(-20 839 105)">N</text><text x="808" y="143" font-size="8" font-weight="bold" fill="#c8c8c8" font-family="Liberation Sans" transform="rotate(-72 813 139)">W</text><text x="847" y="168" font-size="8" font-weight="bold" fill="#cfcfcf" font-family="Liberation Sans" transform="rotate(-12 851 164)">S</text><text x="871" y="129" font-size="7" font-weight="bold" fill="#cfcfcf" font-family="Liberation Sans" transform="rotate(-85 874 126)">E</text><text x="879" y="129" font-size="8" fill="#4aa8d8" font-family="Liberation Sans" font-weight="bold" transform="rotate(-80 882 126)">S</text><text x="879" y="117" font-size="6" fill="#4aa8d8" font-family="Liberation Sans" font-weight="bold" transform="rotate(-70 882 115)">N</text><text x="880" y="140" font-size="6" fill="#4aa8d8" font-family="Liberation Sans" font-weight="bold" transform="rotate(-80 883 138)">m</text><path d="M886 124l4 0l-2 2" stroke="#4aa8d8" stroke-width="1" fill="none"/></g></svg>
<svg class="a" style="left:228px;top:352px;" width="35" height="30" viewBox="0 0 35 30"><g transform="translate(-228,-352)"><text x="234.5" y="363" font-size="6.5" font-weight="bold" fill="#2a2ae0" font-family="Liberation Sans">z</text><path d="M236.5 365 L238.5 376" stroke="#2a3ad0" stroke-width="1.4"/><path d="M239.5 377 L253 374" stroke="#e02a2a" stroke-width="1.4"/><text x="252" y="376.5" font-size="6" fill="#e03030" font-family="Liberation Sans" transform="rotate(-12 254 374)">x</text><path d="M238.8 368 L239.2 376" stroke="#3aa03a" stroke-width="0.6"/></g></svg>
<div class="a" style="left:205px;top:408px;width:700px;height:185px;background:#2f2f2f;"></div>
<div class="a" style="left:208px;top:411px;width:697px;height:13px;background:#1e1e1e;"></div>
<div class="t" style="left:212px;top:414px;font-size:7px;color:#f0f0f0;font-weight:bold;transform:scaleX(0.91);">Resource Browser</div>
<div class="a" style="left:882px;top:414px;width:7px;height:7px;background:transparent;border:1px solid #3a3a3a"></div>
<div class="a" style="left:893px;top:414px;width:7px;height:7px;background:#2a2a2a;border:1px solid #3a3a3a"></div>
<div class="a" style="left:208px;top:424px;width:697px;height:19px;background:#2b2b2b;"></div>
<div class="a" style="left:211px;top:427px;width:120px;height:14px;background:#1f1f1f;border-radius:2px"></div>
<svg class="a" style="left:214px;top:428px;" width="12" height="12" viewBox="0 0 12 12"><circle cx="5" cy="5" r="3.2" fill="none" stroke="#cfcfcf" stroke-width="1.1"/><path d="M7.3 7.3l3 3" stroke="#cfcfcf" stroke-width="1.2"/></svg>
<div class="t" style="left:230px;top:430.5px;font-size:8px;color:#6a6a6a;font-weight:normal;transform:scaleX(0.9);">Search Optic_TrijiconRMR</div>
<div class="a" style="left:333px;top:427px;width:15px;height:14px;background:#353535;"></div>
<div class="a" style="left:349px;top:427px;width:15px;height:14px;background:#353535;"></div>
<div class="a" style="left:365px;top:427px;width:15px;height:14px;background:#353535;"></div>
<svg class="a" style="left:333px;top:427px;" width="16" height="14" viewBox="0 0 16 14"><path d="M4 7h8M7 4l-3 3l3 3" stroke="#d0d0d0" stroke-width="1.1" fill="none"/></svg>
<svg class="a" style="left:349px;top:427px;" width="16" height="14" viewBox="0 0 16 14"><path d="M4 7h8M9 4l3 3l-3 3" stroke="#d0d0d0" stroke-width="1.1" fill="none"/></svg>
<svg class="a" style="left:364px;top:427px;" width="16" height="14" viewBox="0 0 16 14"><path d="M8 12V3M5 6l3-3l3 3" stroke="#d0d0d0" stroke-width="1.1" fill="none"/></svg>
<div class="a" style="left:382px;top:427px;width:14px;height:14px;background:#353535;"></div>
<svg class="a" style="left:382px;top:427px;" width="14" height="14" viewBox="0 0 14 14"><path d="M7 2.5l1.3 2.9l3.2 0.3l-2.4 2.1l0.7 3.1L7 9.3l-2.8 1.6l0.7-3.1L2.5 5.7l3.2-0.3z" fill="#4a90d8"/></svg>
<div class="a" style="left:399px;top:428px;width:44px;height:13px;background:#363636;border-radius:2px"></div>
<div class="t" style="left:401.5px;top:431px;font-size:8px;color:#d8d8d8;font-weight:normal;transform:scaleX(0.84);">LastDaysTST</div>
<svg class="a" style="left:444px;top:431px;" width="6" height="7" viewBox="0 0 6 7"><path d="M2 1l2.3 2.5l-2.3 2.5" stroke="#5b9bd5" stroke-width="0.9" fill="none"/></svg>
<div class="a" style="left:450px;top:428px;width:30px;height:13px;background:#363636;border-radius:2px"></div>
<div class="t" style="left:452.5px;top:431px;font-size:8px;color:#d8d8d8;font-weight:normal;transform:scaleX(0.84);">Prefabs</div>
<svg class="a" style="left:481px;top:431px;" width="6" height="7" viewBox="0 0 6 7"><path d="M2 1l2.3 2.5l-2.3 2.5" stroke="#5b9bd5" stroke-width="0.9" fill="none"/></svg>
<div class="a" style="left:486px;top:428px;width:35px;height:13px;background:#363636;border-radius:2px"></div>
<div class="t" style="left:488.5px;top:431px;font-size:8px;color:#d8d8d8;font-weight:normal;transform:scaleX(0.84);">Weapons</div>
<svg class="a" style="left:522px;top:431px;" width="6" height="7" viewBox="0 0 6 7"><path d="M2 1l2.3 2.5l-2.3 2.5" stroke="#5b9bd5" stroke-width="0.9" fill="none"/></svg>
<div class="a" style="left:528px;top:428px;width:46px;height:13px;background:#363636;border-radius:2px"></div>
<div class="t" style="left:530.5px;top:431px;font-size:8px;color:#d8d8d8;font-weight:normal;transform:scaleX(0.84);">Attachments</div>
<svg class="a" style="left:575px;top:431px;" width="6" height="7" viewBox="0 0 6 7"><path d="M2 1l2.3 2.5l-2.3 2.5" stroke="#5b9bd5" stroke-width="0.9" fill="none"/></svg>
<div class="a" style="left:580px;top:428px;width:26px;height:13px;background:#363636;border-radius:2px"></div>
<div class="t" style="left:582.5px;top:431px;font-size:8px;color:#d8d8d8;font-weight:normal;transform:scaleX(0.84);">Optics</div>
<svg class="a" style="left:607px;top:431px;" width="6" height="7" viewBox="0 0 6 7"><path d="M2 1l2.3 2.5l-2.3 2.5" stroke="#5b9bd5" stroke-width="0.9" fill="none"/></svg>
<div class="a" style="left:613px;top:428px;width:41px;height:13px;background:#363636;border-radius:2px"></div>
<div class="t" style="left:615.5px;top:431px;font-size:8px;color:#d8d8d8;font-weight:normal;transform:scaleX(0.84);">Collimators</div>
<svg class="a" style="left:655px;top:431px;" width="6" height="7" viewBox="0 0 6 7"><path d="M2 1l2.3 2.5l-2.3 2.5" stroke="#5b9bd5" stroke-width="0.9" fill="none"/></svg>
<div class="a" style="left:661px;top:428px;width:63px;height:13px;background:#363636;border-radius:2px"></div>
<div class="t" style="left:663.5px;top:431px;font-size:8px;color:#d8d8d8;font-weight:normal;transform:scaleX(0.84);">Optic_TrijiconRMR</div>
<div class="a" style="left:873px;top:428px;width:13px;height:13px;background:#363636;"></div>
<svg class="a" style="left:873px;top:428px;" width="13" height="13" viewBox="0 0 13 13"><path d="M3 3h7l-2.6 3.4v3.2l-1.8 0.9V6.4z" fill="#e0e0e0"/></svg>
<div class="a" style="left:888px;top:428px;width:13px;height:13px;background:#363636;"></div>
<svg class="a" style="left:888px;top:428px;" width="13" height="13" viewBox="0 0 13 13"><path d="M9.51 5.77 L10.75 5.85 L10.75 7.15 L9.51 7.23 L9.15 8.11 L9.96 9.05 L9.05 9.96 L8.11 9.15 L7.23 9.51 L7.15 10.75 L5.85 10.75 L5.77 9.51 L4.89 9.15 L3.95 9.96 L3.04 9.05 L3.85 8.11 L3.49 7.23 L2.25 7.15 L2.25 5.85 L3.49 5.77 L3.85 4.89 L3.04 3.95 L3.95 3.04 L4.89 3.85 L5.77 3.49 L5.85 2.25 L7.15 2.25 L7.23 3.49 L8.11 3.85 L9.05 3.04 L9.96 3.95 L9.15 4.89Z" fill="#e0e0e0"/><circle cx="6.5" cy="6.5" r="1.5" fill="#363636"/></svg>
<div class="a" style="left:211px;top:444px;width:166px;height:16px;background:#1f1f1f;"></div>
<div class="a" style="left:211px;top:462px;width:166px;height:127px;background:#222;"></div>
<div class="a" style="left:371px;top:463px;width:6px;height:125px;background:#2a2a2a;"></div>
<div class="a" style="left:372px;top:529px;width:4px;height:17px;background:#8a8a8a;border-radius:2px"></div>
<div class="a" style="left:211px;top:572px;width:156px;height:12px;background:#3b3b3c;"></div>
<svg class="a" style="left:240px;top:467px;" width="7" height="6" viewBox="0 0 7 6"><path d="M1 1.2h5l-2.5 3.3z" fill="#9ccbe6"/></svg>
<svg class="a" style="left:249px;top:465px;" width="11" height="9" viewBox="0 0 11 9"><path d="M0.5 1h4l1 1h5v6.5h-10z" fill="#3d73ad"/><path d="M0.5 3.2h10v5.3h-10z" fill="#5a93cc"/></svg>
<div class="t" style="left:263px;top:466px;font-size:8px;color:#cfcfcf;font-weight:normal;transform:scaleX(0.9);">Attachments</div>
<svg class="a" style="left:249px;top:478px;" width="7" height="8" viewBox="0 0 7 8"><path d="M2 1l3 3l-3 3" stroke="#bdbdbd" stroke-width="1" fill="none"/></svg>
<svg class="a" style="left:258px;top:477px;" width="11" height="9" viewBox="0 0 11 9"><path d="M0.5 1h4l1 1h5v6.5h-10z" fill="#3d73ad"/><path d="M0.5 3.2h10v5.3h-10z" fill="#5a93cc"/></svg>
<div class="t" style="left:272px;top:478px;font-size:8px;color:#cfcfcf;font-weight:normal;transform:scaleX(0.9);">Grips</div>
<svg class="a" style="left:249px;top:490px;" width="7" height="8" viewBox="0 0 7 8"><path d="M2 1l3 3l-3 3" stroke="#bdbdbd" stroke-width="1" fill="none"/></svg>
<svg class="a" style="left:258px;top:489px;" width="11" height="9" viewBox="0 0 11 9"><path d="M0.5 1h4l1 1h5v6.5h-10z" fill="#3d73ad"/><path d="M0.5 3.2h10v5.3h-10z" fill="#5a93cc"/></svg>
<div class="t" style="left:272px;top:490px;font-size:8px;color:#cfcfcf;font-weight:normal;transform:scaleX(0.9);">Handguards</div>
<svg class="a" style="left:258px;top:501px;" width="11" height="9" viewBox="0 0 11 9"><path d="M0.5 1h4l1 1h5v6.5h-10z" fill="#3d73ad"/><path d="M0.5 3.2h10v5.3h-10z" fill="#5a93cc"/></svg>
<div class="t" style="left:272px;top:502px;font-size:8px;color:#cfcfcf;font-weight:normal;transform:scaleX(0.9);">Lights</div>
<svg class="a" style="left:258px;top:513px;" width="11" height="9" viewBox="0 0 11 9"><path d="M0.5 1h4l1 1h5v6.5h-10z" fill="#3d73ad"/><path d="M0.5 3.2h10v5.3h-10z" fill="#5a93cc"/></svg>
<div class="t" style="left:272px;top:514px;font-size:8px;color:#cfcfcf;font-weight:normal;transform:scaleX(0.9);">Mounts</div>
<svg class="a" style="left:249px;top:526px;" width="7" height="8" viewBox="0 0 7 8"><path d="M2 1l3 3l-3 3" stroke="#bdbdbd" stroke-width="1" fill="none"/></svg>
<svg class="a" style="left:258px;top:525px;" width="11" height="9" viewBox="0 0 11 9"><path d="M0.5 1h4l1 1h5v6.5h-10z" fill="#3d73ad"/><path d="M0.5 3.2h10v5.3h-10z" fill="#5a93cc"/></svg>
<div class="t" style="left:272px;top:526px;font-size:8px;color:#cfcfcf;font-weight:normal;transform:scaleX(0.9);">Muzzle</div>
<svg class="a" style="left:249px;top:539px;" width="7" height="6" viewBox="0 0 7 6"><path d="M1 1.2h5l-2.5 3.3z" fill="#9ccbe6"/></svg>
<svg class="a" style="left:258px;top:537px;" width="11" height="9" viewBox="0 0 11 9"><path d="M0.5 1h4l1 1h5v6.5h-10z" fill="#3d73ad"/><path d="M0.5 3.2h10v5.3h-10z" fill="#5a93cc"/></svg>
<div class="t" style="left:272px;top:538px;font-size:8px;color:#cfcfcf;font-weight:normal;transform:scaleX(0.9);">Optics</div>
<svg class="a" style="left:258px;top:551px;" width="7" height="6" viewBox="0 0 7 6"><path d="M1 1.2h5l-2.5 3.3z" fill="#9ccbe6"/></svg>
<svg class="a" style="left:268px;top:549px;" width="11" height="9" viewBox="0 0 11 9"><path d="M0.5 1h4l1 1h5v6.5h-10z" fill="#3d73ad"/><path d="M0.5 3.2h10v5.3h-10z" fill="#5a93cc"/></svg>
<div class="t" style="left:281px;top:550px;font-size:8px;color:#cfcfcf;font-weight:normal;transform:scaleX(0.9);">Collimators</div>
<svg class="a" style="left:277px;top:561px;" width="11" height="9" viewBox="0 0 11 9"><path d="M0.5 1h4l1 1h5v6.5h-10z" fill="#3d73ad"/><path d="M0.5 3.2h10v5.3h-10z" fill="#5a93cc"/></svg>
<div class="t" style="left:290px;top:562px;font-size:8px;color:#cfcfcf;font-weight:normal;transform:scaleX(0.9);">Optic_TrijiconMRO</div>
<svg class="a" style="left:277px;top:573px;" width="11" height="9" viewBox="0 0 11 9"><path d="M0.5 1h4l1 1h5v6.5h-10z" fill="#3d73ad"/><path d="M0.5 3.2h10v5.3h-10z" fill="#5a93cc"/></svg>
<div class="t" style="left:290px;top:574px;font-size:8px;color:#f0f0f0;font-weight:normal;transform:scaleX(0.9);">Optic_TrijiconRMR</div>
<div class="a" style="left:276px;top:584px;width:90px;height:4px;overflow:hidden"><svg class="a" style="left:0;top:1px" width="11" height="9"><path d="M0.5 1h4l1 1h5v6.5h-10z" fill="#3d73ad"/><path d="M0.5 3.2h10v5.3h-10z" fill="#5a93cc"/></svg><div class="t" style="left:14px;top:2px;font-size:8px;color:#cfcfcf;transform:scaleX(0.9)">Optic_TrijiconSRO</div></div>
<div class="a" style="left:380px;top:444px;width:522px;height:128px;background:#222;"></div>
<div class="a" style="left:380px;top:572px;width:522px;height:1px;background:#1c1c1c;"></div>
<div class="a" style="left:382px;top:445px;width:57px;height:70px;background:#4b4b4d;"></div>
<div class="a" style="left:391px;top:448px;width:38px;height:35px;background:#a8b4b8;"></div>
<svg class="a" style="left:391px;top:448px;" width="38" height="35" viewBox="0 0 38 35"><defs><linearGradient id="th" x1="0" y1="0" x2="0" y2="1"><stop offset="0" stop-color="#cde0ea"/><stop offset="1" stop-color="#858e92"/></linearGradient></defs><rect width="38" height="35" fill="url(#th)"/><path d="M5 3l18-0.5l1.5 5v26l-12 1l-4-6l-3.5-6z" fill="#4a4d4b"/><path d="M7 6h9v16h-9z" fill="#5c6361"/><path d="M8.5 8h6v11h-6z" fill="#464b49"/><path d="M23 11l10 1.5v9l-8.5 1.5z" fill="#55585a"/><path d="M12 28l15-2l2 7l-13 1.5z" fill="#3a3c3b"/><path d="M24 30l4-2l1 2l-4 2z" fill="#cfc6a8"/><path d="M16 4h6v24h-6z" fill="#404341"/></svg>
<div class="a" style="left:384px;top:484px;width:48px;height:2px;background:#2f86d0;"></div>
<div class="t" style="left:387px;top:488px;font-size:8px;color:#f0f0f0;font-weight:normal;transform:scaleX(0.9);">Collim_RMR.et</div>
<div class="a" style="left:380px;top:573px;width:522px;height:18px;background:#2d2d2f;"></div>
<div class="t" style="left:385px;top:578.5px;font-size:8px;color:#c0c0c0;font-weight:normal;transform:scaleX(0.83);">1 items (1 selected)</div>
<div class="a" style="left:809px;top:575px;width:43px;height:13px;background:#3a3a3a;border-radius:1px"></div>
<div class="t" style="left:820px;top:578px;font-size:8px;color:#cfcfcf;font-weight:normal;transform:scaleX(0.9);">Import</div>
<div class="a" style="left:856px;top:575px;width:43px;height:13px;background:#3a3a3a;border-radius:1px"></div>
<div class="t" style="left:864px;top:578px;font-size:8px;color:#cfcfcf;font-weight:normal;transform:scaleX(0.9);">Create</div>
<svg class="a" style="left:892px;top:580px;" width="5" height="5" viewBox="0 0 5 5"><path d="M0.5 2h4l-2 2z" fill="#cfcfcf"/></svg>
<div class="a" style="left:208px;top:593px;width:62px;height:13px;background:#2b2b2b;"></div>
<div class="t" style="left:211px;top:596px;font-size:8px;color:#e6e6e6;font-weight:normal;transform:scaleX(0.84);">Resource Browser</div>
<div class="a" style="left:208px;top:604.5px;width:62px;height:1.5px;background:#2a7ac6;"></div>
<div class="a" style="left:270px;top:593px;width:97px;height:13px;background:#232323;"></div>
<div class="t" style="left:274px;top:596px;font-size:8px;color:#8a8a8a;font-weight:normal;transform:scaleX(0.86);">Prefab Library</div>
<div class="t" style="left:325px;top:596px;font-size:8px;color:#8a8a8a;font-weight:normal;transform:scaleX(0.86);">Log Console</div>
<div class="a" style="left:905px;top:55px;width:247px;height:538px;background:#2f2f2f;"></div>
<div class="a" style="left:909px;top:55px;width:243px;height:13px;background:#1e1e1e;"></div>
<div class="t" style="left:913px;top:58px;font-size:7px;color:#f0f0f0;font-weight:bold;transform:scaleX(0.91);">Object Properties</div>
<div class="a" style="left:1130px;top:58px;width:7px;height:7px;background:transparent;border:1px solid #3a3a3a"></div>
<div class="a" style="left:1141px;top:58px;width:7px;height:7px;background:#2a2a2a;border:1px solid #3a3a3a"></div>
<div class="a" style="left:910px;top:71px;width:119px;height:14px;background:#3a3a3a;"></div>
<div class="t" style="left:913px;top:74.5px;font-size:8px;color:#cfcfcf;font-weight:normal;transform:scaleX(0.9);">GenericEntity</div>
<div class="a" style="left:1031px;top:71px;width:118px;height:14px;background:#1f1f1f;"></div>
<div class="t" style="left:1034px;top:74.5px;font-size:8px;color:#6a6a6a;font-weight:normal;transform:scaleX(0.9);">[no name]</div>
<div class="a" style="left:910px;top:87px;width:225px;height:14px;background:#1f1f1f;"></div>
<svg class="a" style="left:913px;top:88px;" width="12" height="12" viewBox="0 0 12 12"><circle cx="5" cy="5" r="3.2" fill="none" stroke="#cfcfcf" stroke-width="1.1"/><path d="M7.3 7.3l3 3" stroke="#cfcfcf" stroke-width="1.2"/></svg>
<div class="t" style="left:930px;top:90.5px;font-size:8px;color:#6a6a6a;font-weight:normal;transform:scaleX(0.9);">Filter Components</div>
<div class="a" style="left:1136px;top:87px;width:13px;height:14px;background:#383838;"></div>
<svg class="a" style="left:1136px;top:87px;" width="13" height="14" viewBox="0 0 13 14"><path d="M9.51 6.27 L10.75 6.35 L10.75 7.65 L9.51 7.73 L9.15 8.61 L9.96 9.55 L9.05 10.46 L8.11 9.65 L7.23 10.01 L7.15 11.25 L5.85 11.25 L5.77 10.01 L4.89 9.65 L3.95 10.46 L3.04 9.55 L3.85 8.61 L3.49 7.73 L2.25 7.65 L2.25 6.35 L3.49 6.27 L3.85 5.39 L3.04 4.45 L3.95 3.54 L4.89 4.35 L5.77 3.99 L5.85 2.75 L7.15 2.75 L7.23 3.99 L8.11 4.35 L9.05 3.54 L9.96 4.45 L9.15 5.39Z" fill="#e0e0e0"/><circle cx="6.5" cy="7" r="1.5" fill="#383838"/></svg>
<div class="a" style="left:910px;top:103px;width:240px;height:183px;background:#242424;border:1px solid #202022"></div>
<div class="a" style="left:905px;top:68px;width:3px;height:523px;background:#343436;"></div>
<div class="a" style="left:908px;top:68px;width:2px;height:523px;background:#454548;"></div>
<div class="a" style="left:1150px;top:68px;width:2px;height:523px;background:#424244;"></div>
<div class="a" style="left:911px;top:140px;width:237px;height:12px;background:#3b3b3c;"></div>
<svg class="a" style="left:912px;top:105px;" width="11" height="11" viewBox="0 0 11 11"><path d="M5.5 0.5l4.6 2.5v5L5.5 10.5L0.9 8V3z" fill="#c46a70" stroke="#d88a90" stroke-width="0.6"/><circle cx="5.5" cy="5.5" r="2" fill="#e09aa0"/></svg>
<div class="t" style="left:925px;top:106.5px;font-size:8px;color:#cfcfcf;font-weight:normal;transform:scaleX(0.9);">GenericEntity</div>
<div class="t" style="left:1141px;top:106.5px;font-size:8px;color:#cfcfcf;font-weight:normal;transform:scaleX(0.9);">0</div>
<div class="a" style="left:922px;top:117.0px;width:10px;height:11px;background:#2c4a36;border:1.5px solid #8fc2a0;border-radius:2px"></div>
<div class="t" style="left:923.6px;top:119.0px;font-size:8px;color:#c4e4cc;font-weight:bold;">G</div>
<div class="t" style="left:935px;top:118.5px;font-size:8px;color:#cfcfcf;font-weight:normal;transform:scaleX(0.9);">InventoryItemComponent</div>
<div class="t" style="left:1141px;top:118.5px;font-size:8px;color:#cfcfcf;font-weight:normal;transform:scaleX(0.9);">0</div>
<div class="a" style="left:922px;top:129.0px;width:10px;height:11px;background:#2c4a36;border:1.5px solid #8fc2a0;border-radius:2px"></div>
<div class="t" style="left:923.6px;top:131.0px;font-size:8px;color:#c4e4cc;font-weight:bold;">E</div>
<div class="t" style="left:935px;top:130.5px;font-size:8px;color:#cfcfcf;font-weight:normal;transform:scaleX(0.9);">MeshObject</div>
<div class="t" style="left:1141px;top:130.5px;font-size:8px;color:#cfcfcf;font-weight:normal;transform:scaleX(0.9);">0</div>
<div class="a" style="left:922px;top:141.0px;width:10px;height:11px;background:#4e4622;border:1.5px solid #cfc07a;border-radius:2px"></div>
<div class="t" style="left:923.6px;top:143.0px;font-size:8px;color:#e8dc98;font-weight:bold;">S</div>
<div class="t" style="left:935px;top:142.5px;font-size:8px;color:#f4f4f4;font-weight:normal;transform:scaleX(0.9);">WatchComponent</div>
<div class="t" style="left:1141px;top:142.5px;font-size:8px;color:#f4f4f4;font-weight:normal;transform:scaleX(0.9);">0</div>
<div class="a" style="left:922px;top:153.0px;width:10px;height:11px;background:#2c4a36;border:1.5px solid #8fc2a0;border-radius:2px"></div>
<div class="t" style="left:923.6px;top:155.0px;font-size:8px;color:#c4e4cc;font-weight:bold;">G</div>
<div class="t" style="left:935px;top:154.5px;font-size:8px;color:#cfcfcf;font-weight:normal;transform:scaleX(0.9);">BaseLoadoutClothComponent</div>
<div class="t" style="left:1141px;top:154.5px;font-size:8px;color:#cfcfcf;font-weight:normal;transform:scaleX(0.9);">0</div>
<div class="a" style="left:922px;top:165.0px;width:10px;height:11px;background:#2c4a36;border:1.5px solid #8fc2a0;border-radius:2px"></div>
<div class="t" style="left:923.6px;top:167.0px;font-size:8px;color:#c4e4cc;font-weight:bold;">G</div>
<div class="t" style="left:935px;top:166.5px;font-size:8px;color:#cfcfcf;font-weight:normal;transform:scaleX(0.9);">RplComponent</div>
<div class="t" style="left:1141px;top:166.5px;font-size:8px;color:#cfcfcf;font-weight:normal;transform:scaleX(0.9);">0</div>
<div class="a" style="left:922px;top:177.0px;width:10px;height:11px;background:#2c4a36;border:1.5px solid #8fc2a0;border-radius:2px"></div>
<div class="t" style="left:923.6px;top:179.0px;font-size:8px;color:#c4e4cc;font-weight:bold;">E</div>
<div class="t" style="left:935px;top:178.5px;font-size:8px;color:#cfcfcf;font-weight:normal;transform:scaleX(0.9);">Hierarchy</div>
<div class="t" style="left:1141px;top:178.5px;font-size:8px;color:#cfcfcf;font-weight:normal;transform:scaleX(0.9);">0</div>
<div class="a" style="left:909px;top:287px;width:241px;height:15px;background:#2b2b2b;"></div>
<div class="a" style="left:911px;top:287px;width:65px;height:15px;background:#1f1f1f;"></div>
<svg class="a" style="left:914px;top:289px;" width="12" height="12" viewBox="0 0 12 12"><circle cx="5" cy="5" r="3.2" fill="none" stroke="#cfcfcf" stroke-width="1.1"/><path d="M7.3 7.3l3 3" stroke="#cfcfcf" stroke-width="1.2"/></svg>
<div class="t" style="left:929px;top:291px;font-size:8px;color:#6a6a6a;font-weight:normal;transform:scaleX(0.9);">Search</div>
<div class="a" style="left:978px;top:287px;width:108px;height:15px;background:#373737;"></div>
<svg class="a" style="left:981px;top:289px;" width="11" height="11" viewBox="0 0 11 11"><path d="M5.5 0.5l4.6 2.5v5L5.5 10.5L0.9 8V3z" fill="#2f78b8"/><path d="M5.5 0.5l4.6 2.5L5.5 5.5L0.9 3z" fill="#8ac0ea"/></svg>
<div class="t" style="left:994px;top:290.5px;font-size:9px;color:#e4e4e4;font-weight:normal;transform:scaleX(0.86);">SmartWatch.et (LastI</div>
<div class="a" style="left:1073px;top:288px;width:1px;height:13px;background:#2c2c2c;"></div>
<svg class="a" style="left:1076px;top:292px;" width="6" height="5" viewBox="0 0 6 5"><path d="M0.5 1h5l-2.5 3z" fill="#8a8a8a"/></svg>
<div class="a" style="left:1088px;top:288px;width:14px;height:13px;background:#353535;"></div>
<div class="a" style="left:1104px;top:288px;width:14px;height:13px;background:#353535;"></div>
<svg class="a" style="left:1088px;top:288px;" width="14" height="13" viewBox="0 0 14 13"><path d="M4 4h3M4 4v6h6v-3M7 7l4-4M8.5 3h2.5v2.5" stroke="#d0d0d0" stroke-width="1" fill="none"/></svg>
<svg class="a" style="left:1104px;top:288px;" width="14" height="13" viewBox="0 0 14 13"><circle cx="6" cy="6" r="2.5" fill="none" stroke="#d0d0d0" stroke-width="1.1"/><path d="M8 8l2.5 2.5" stroke="#d0d0d0" stroke-width="1.2"/></svg>
<div class="a" style="left:1120px;top:287px;width:15px;height:15px;background:#1f1f1f;"></div>
<svg class="a" style="left:1120px;top:287px;" width="15" height="15" viewBox="0 0 15 15"><path d="M5 3v9h6M5 7h5M5 10h5" stroke="#5aa8e0" stroke-width="1.1" fill="none"/></svg>
<div class="a" style="left:1136px;top:288px;width:13px;height:13px;background:#383838;"></div>
<svg class="a" style="left:1136px;top:288px;" width="13" height="13" viewBox="0 0 13 13"><path d="M9.51 5.77 L10.75 5.85 L10.75 7.15 L9.51 7.23 L9.15 8.11 L9.96 9.05 L9.05 9.96 L8.11 9.15 L7.23 9.51 L7.15 10.75 L5.85 10.75 L5.77 9.51 L4.89 9.15 L3.95 9.96 L3.04 9.05 L3.85 8.11 L3.49 7.23 L2.25 7.15 L2.25 5.85 L3.49 5.77 L3.85 4.89 L3.04 3.95 L3.95 3.04 L4.89 3.85 L5.77 3.49 L5.85 2.25 L7.15 2.25 L7.23 3.49 L8.11 3.85 L9.05 3.04 L9.96 3.95 L9.15 4.89Z" fill="#e0e0e0"/><circle cx="6.5" cy="6.5" r="1.5" fill="#383838"/></svg>
<div class="a" style="left:909px;top:304px;width:241px;height:285px;background:#262626;"></div>
<div class="a" style="left:1044px;top:323px;width:1px;height:198px;background:#2f2f2f;"></div>
<div class="a" style="left:911px;top:308px;width:237px;height:14px;background:#0a7ad4;"></div>
<svg class="a" style="left:913px;top:310px;" width="10" height="10" viewBox="0 0 10 10"><path d="M1.5 3l3.5 3.5l3.5-3.5" stroke="#ffffff" stroke-width="1.6" fill="none"/></svg>
<div class="t" style="left:927px;top:311px;font-size:8.5px;color:#ffffff;font-weight:bold;transform:scaleX(0.88);">Gadget</div>
<div class="t" style="left:920px;top:328.5px;font-size:8px;color:#f0f0f0;font-weight:bold;transform:scaleX(0.9);">Anim Variable</div>
<div class="a" style="left:1048px;top:326px;width:89px;height:11px;background:#393939;"></div>
<div class="t" style="left:1051px;top:328px;font-size:8px;color:#d0d0d0;font-weight:normal;transform:scaleX(0.9);">SY183</div>
<div class="a" style="left:1125px;top:327px;width:1px;height:9px;background:#2c2c2c;"></div>
<svg class="a" style="left:1128px;top:329px;" width="6" height="5" viewBox="0 0 6 5"><path d="M0.5 1h5l-2.5 3z" fill="#8a8a8a"/></svg>
<svg class="a" style="left:1138px;top:326px;" width="10" height="10" viewBox="0 0 10 10"><path d="M3 4.5A3.2 3.2 0 1 1 3.5 7.5" stroke="#d0d0d0" stroke-width="1" fill="none"/><path d="M1.5 2.5v3h3z" fill="#d0d0d0"/></svg>
<svg class="a" style="left:912px;top:344px;" width="6" height="5" viewBox="0 0 6 5"><path d="M0.5 1h5l-2.5 3z" fill="#6aaee0"/></svg>
<div class="t" style="left:920px;top:343px;font-size:8px;color:#bdbdbd;font-weight:normal;transform:scaleX(0.9);">Use Mask</div>
<div class="t" style="left:928px;top:356.5px;font-size:8.5px;color:#b8b8b8;font-weight:normal;transform:scaleX(0.8);">NONE</div>
<div class="a" style="left:1049px;top:356px;width:10px;height:10px;background:#232323;border:1px solid #4a4a4a"></div>
<div class="t" style="left:928px;top:371.0px;font-size:8.5px;color:#b8b8b8;font-weight:normal;transform:scaleX(0.8);">FROM ACTION</div>
<div class="a" style="left:1049px;top:370.5px;width:10px;height:10px;background:#232323;border:1px solid #4a4a4a"></div>
<div class="t" style="left:928px;top:385.5px;font-size:8.5px;color:#b8b8b8;font-weight:normal;transform:scaleX(0.8);">FROM INVENTORY</div>
<div class="a" style="left:1049px;top:385px;width:10px;height:10px;background:#232323;border:1px solid #4a4a4a"></div>
<div class="t" style="left:928px;top:400.0px;font-size:8.5px;color:#b8b8b8;font-weight:normal;transform:scaleX(0.8);">FROM QUICKSLOT</div>
<div class="a" style="left:1049px;top:399.5px;width:10px;height:10px;background:#232323;border:1px solid #4a4a4a"></div>
<div class="t" style="left:928px;top:414.5px;font-size:8.5px;color:#b8b8b8;font-weight:normal;transform:scaleX(0.8);">CUSTOM</div>
<div class="a" style="left:1049px;top:414px;width:10px;height:10px;background:#232323;border:1px solid #4a4a4a"></div>
<div class="t" style="left:920px;top:429.5px;font-size:8px;color:#bdbdbd;font-weight:normal;transform:scaleX(0.9);">Equipment Slot Offset</div>
<div class="a" style="left:1049px;top:428px;width:30px;height:11px;background:#1f1f1f;"></div>
<div class="a" style="left:1049px;top:428px;width:7px;height:11px;background:#d0564a;"></div>
<div class="t" style="left:1050.3px;top:430px;font-size:7px;color:#f0f0f0;font-weight:normal;transform:scaleX(0.91);">X</div>
<div class="t" style="left:1059px;top:430px;font-size:8px;color:#cfcfcf;font-weight:normal;transform:scaleX(0.9);">0</div>
<div class="a" style="left:1079px;top:428px;width:30px;height:11px;background:#1f1f1f;"></div>
<div class="a" style="left:1079px;top:428px;width:7px;height:11px;background:#7fae6e;"></div>
<div class="t" style="left:1080.3px;top:430px;font-size:7px;color:#f0f0f0;font-weight:normal;transform:scaleX(0.91);">Y</div>
<div class="t" style="left:1089px;top:430px;font-size:8px;color:#cfcfcf;font-weight:normal;transform:scaleX(0.9);">0</div>
<div class="a" style="left:1108px;top:428px;width:30px;height:11px;background:#1f1f1f;"></div>
<div class="a" style="left:1108px;top:428px;width:7px;height:11px;background:#5a9ec8;"></div>
<div class="t" style="left:1109.3px;top:430px;font-size:7px;color:#f0f0f0;font-weight:normal;transform:scaleX(0.91);">Z</div>
<div class="t" style="left:1118px;top:430px;font-size:8px;color:#cfcfcf;font-weight:normal;transform:scaleX(0.9);">0</div>
<div class="t" style="left:920px;top:444px;font-size:8px;color:#bdbdbd;font-weight:normal;transform:scaleX(0.9);">Weapon No Fire Time</div>
<div class="a" style="left:1048px;top:442px;width:89px;height:11px;background:#1f1f1f;"></div>
<div class="t" style="left:1051px;top:444px;font-size:8px;color:#d0d0d0;font-weight:normal;transform:scaleX(0.9);">0.500</div>
<div class="t" style="left:920px;top:458px;font-size:8px;color:#bdbdbd;font-weight:normal;transform:scaleX(0.9);">Can Be Held</div>
<div class="a" style="left:1049px;top:457px;width:10px;height:10px;background:#232323;border:1px solid #4a4a4a"></div>
<svg class="a" style="left:1049px;top:457px;" width="10" height="10" viewBox="0 0 10 10"><path d="M2 5l2 2l4-4.5" stroke="#e8e8e8" stroke-width="1.1" fill="none"/></svg>
<div class="a" style="left:911px;top:472px;width:237px;height:14px;background:#0a7ad4;"></div>
<svg class="a" style="left:913px;top:474px;" width="10" height="10" viewBox="0 0 10 10"><path d="M1.5 3l3.5 3.5l3.5-3.5" stroke="#ffffff" stroke-width="1.6" fill="none"/></svg>
<div class="t" style="left:927px;top:475px;font-size:8.5px;color:#ffffff;font-weight:bold;transform:scaleX(0.88);">Unsorted</div>
<div class="t" style="left:920px;top:492px;font-size:8px;color:#bdbdbd;font-weight:normal;transform:scaleX(0.9);">Enabled</div>
<div class="a" style="left:1049px;top:490px;width:10px;height:10px;background:#232323;border:1px solid #4a4a4a"></div>
<svg class="a" style="left:1049px;top:490px;" width="10" height="10" viewBox="0 0 10 10"><path d="M2 5l2 2l4-4.5" stroke="#e8e8e8" stroke-width="1.1" fill="none"/></svg>
<div class="t" style="left:920px;top:506.5px;font-size:8px;color:#f0f0f0;font-weight:bold;transform:scaleX(0.9);">Layout Name</div>
<div class="a" style="left:1047px;top:504px;width:55px;height:12px;background:#1f1f1f;"></div>
<div class="t" style="left:1049px;top:506.5px;font-size:8px;color:#d0d0d0;font-weight:normal;transform:scaleX(0.9);">tS_Watch.layout</div>
<div class="a" style="left:1102px;top:504px;width:13px;height:12px;background:#363636;"></div>
<svg class="a" style="left:1102px;top:504px;" width="13" height="12" viewBox="0 0 13 12"><path d="M3.5 3.5h3M3.5 3.5v6h6v-3M6 7l4-4M8 3h2v2" stroke="#d0d0d0" stroke-width="1" fill="none"/></svg>
<div class="a" style="left:1115px;top:504px;width:12px;height:12px;background:#363636;"></div>
<svg class="a" style="left:1115px;top:504px;" width="12" height="12" viewBox="0 0 12 12"><circle cx="5.5" cy="5.5" r="2.3" fill="none" stroke="#d0d0d0" stroke-width="1.1"/><path d="M7.3 7.3l2.3 2.3" stroke="#d0d0d0" stroke-width="1.2"/></svg>
<div class="a" style="left:1128px;top:504px;width:9px;height:12px;background:#3a3a3a;"></div>
<div class="t" style="left:1129.5px;top:506px;font-size:7px;color:#aaa;font-weight:normal;transform:scaleX(0.91);">...</div>
<svg class="a" style="left:1138px;top:505px;" width="10" height="10" viewBox="0 0 10 10"><path d="M3 4.5A3.2 3.2 0 1 1 3.5 7.5" stroke="#d0d0d0" stroke-width="1" fill="none"/><path d="M1.5 2.5v3h3z" fill="#d0d0d0"/></svg>
<div class="a" style="left:909px;top:562px;width:241px;height:2px;background:#1f1f21;"></div>
<div class="a" style="left:909px;top:564px;width:241px;height:27px;background:#2d2d2d;"></div>
<div class="a" style="left:912px;top:568px;width:116px;height:20px;background:#3a3d42;border:1.5px solid #2a88d6;border-radius:2px;background:linear-gradient(#42464c,#34373c)"></div>
<div class="t" style="left:942px;top:575px;font-size:8px;color:#f4f4f4;font-weight:bold;transform:scaleX(0.86);">+ Add Component</div>
<div class="a" style="left:1033px;top:568px;width:114px;height:20px;background:#2b2b2b;border:1px solid #353535;border-radius:2px"></div>
<div class="t" style="left:1066px;top:575px;font-size:8px;color:#424242;font-weight:normal;transform:scaleX(0.9);">Apply to prefab</div>
<div class="a" style="left:906px;top:593px;width:62px;height:13px;background:#2b2b2b;"></div>
<div class="t" style="left:911px;top:596px;font-size:8px;color:#e6e6e6;font-weight:normal;transform:scaleX(0.86);">Object Properties</div>
<div class="a" style="left:908px;top:604.5px;width:60px;height:1.5px;background:#2a7ac6;"></div>
<div class="a" style="left:968px;top:593px;width:25px;height:13px;background:#232323;"></div>
<div class="t" style="left:973px;top:596px;font-size:8px;color:#8a8a8a;font-weight:normal;transform:scaleX(0.9);">Move</div>
<div class="a" style="left:0px;top:607px;width:1152px;height:13px;background:#2d2d2d;"></div>
<div class="t" style="left:163px;top:609.5px;font-size:7.9px;color:#c8c8c8;font-weight:normal;transform:scaleX(0.86);">-0.01</div>
<div class="t" style="left:188px;top:609.5px;font-size:7.9px;color:#c8c8c8;font-weight:normal;transform:scaleX(0.86);">0.19</div>
<div class="t" style="left:210px;top:609.5px;font-size:7.9px;color:#c8c8c8;font-weight:normal;transform:scaleX(0.86);">-0.03 [dir: 0.051 -0.965 &nbsp;0.257 = north]</div>
<div class="t" style="left:678px;top:609.5px;font-size:7.9px;color:#c8c8c8;font-weight:normal;transform:scaleX(0.86);">Material: none</div>
<div class="t" style="left:1050px;top:609.5px;font-size:7.9px;color:#c0c0c0;font-weight:normal;transform:scaleX(0.86);">Version 1.6.0.54 (production)</div>
<div class="a" style="left:0px;top:620px;width:1152px;height:28px;background:#201e1c;"></div>
<div class="a" style="left:0px;top:619px;width:1152px;height:1px;background:#3a3a3a;"></div>
<svg class="a" style="left:8px;top:621px;" width="22" height="24" viewBox="0 0 22 24"><path d="M18 10Q20 18 12 19Q7 19 5 16Q10 17 13 14Q15 12 14 9z" fill="#f2a93a"/><circle cx="15" cy="6.5" r="4.2" fill="#ee7f95"/><text x="13.2" y="9" font-size="6.5" fill="#fff" font-family="Liberation Sans">7</text></svg>
<div class="t" style="left:30px;top:626.5px;font-size:8px;color:#f0f0f0;font-weight:bold;transform:scaleX(0.9);">49°F</div>
<div class="t" style="left:30px;top:636px;font-size:8px;color:#e0e0e0;font-weight:normal;transform:scaleX(0.9);">Clear</div>
<svg class="a" style="left:395px;top:626px;" width="16" height="16" viewBox="0 0 16 16"><rect x="1" y="1" width="6.5" height="6.5" fill="#4cc2ff"/><rect x="8.5" y="1" width="6.5" height="6.5" fill="#4cc2ff"/><rect x="1" y="8.5" width="6.5" height="6.5" fill="#3aa8f0"/><rect x="8.5" y="8.5" width="6.5" height="6.5" fill="#3aa8f0"/></svg>
<div class="a" style="left:418px;top:623px;width:133px;height:22px;background:#3a3938;border-radius:11px"></div>
<svg class="a" style="left:423px;top:627px;" width="14" height="14" viewBox="0 0 14 14"><circle cx="6" cy="6" r="3.8" fill="none" stroke="#e8e8e8" stroke-width="1.2"/><path d="M8.8 8.8l3 3" stroke="#e8e8e8" stroke-width="1.3"/></svg>
<div class="t" style="left:440px;top:629.5px;font-size:9px;color:#e6e6e6;font-weight:normal;transform:scaleX(0.92);">Search</div>
<svg class="a" style="left:524px;top:625px;" width="22" height="18" viewBox="0 0 22 18"><ellipse cx="11" cy="9" rx="9" ry="5" transform="rotate(25 11 9)" fill="#c8a050"/><ellipse cx="11" cy="9" rx="6" ry="2.5" transform="rotate(25 11 9)" fill="#6a9a3a"/></svg>
<svg class="a" style="left:557px;top:626px;" width="16" height="16" viewBox="0 0 16 16"><rect x="5" y="2" width="10" height="9" fill="#d8d8d8"/><rect x="1" y="5" width="10" height="9" fill="#8a8a8a"/></svg>
<svg class="a" style="left:583px;top:625px;" width="18" height="17" viewBox="0 0 18 17"><path d="M1 3h6l2 2h8v10H1z" fill="#e8b820"/><path d="M1 7h16v8H1z" fill="#ffd84a"/></svg>
<div class="a" style="left:589px;top:643px;width:5px;height:1.5px;background:#9a9a9a;"></div>
<svg class="a" style="left:608px;top:624px;" width="19" height="19" viewBox="0 0 19 19"><circle cx="9.5" cy="9.5" r="8" fill="#1a8ad8"/><path d="M3 10Q5 3 12 4Q17 6 15 10Q10 9 8 12Q9 16 14 15Q8 19 4 14z" fill="#48c08a"/><circle cx="11" cy="10.5" r="3" fill="#1d1c1b"/></svg>
<div class="a" style="left:614px;top:643px;width:5px;height:1.5px;background:#9a9a9a;"></div>
<svg class="a" style="left:634px;top:625px;" width="18" height="18" viewBox="0 0 18 18"><rect x="2" y="4" width="14" height="12" rx="2" fill="#f0f0f0"/><rect x="6" y="8" width="3" height="3" fill="#f05030"/><rect x="9.5" y="8" width="3" height="3" fill="#80c020"/><rect x="6" y="11.5" width="3" height="3" fill="#20a0f0"/><rect x="9.5" y="11.5" width="3" height="3" fill="#f0c000"/></svg>
<svg class="a" style="left:660px;top:625px;" width="18" height="18" viewBox="0 0 18 18"><circle cx="9" cy="9" r="8" fill="#1b3a6a"/><circle cx="11" cy="7" r="3" fill="none" stroke="#e8e8e8" stroke-width="1.4"/><path d="M2 10l7 3" stroke="#e8e8e8" stroke-width="2"/></svg>
<div class="a" style="left:666px;top:643px;width:5px;height:1.5px;background:#9a9a9a;"></div>
<div class="a" style="left:682px;top:622px;width:29px;height:24px;background:#2e2d2c;border-radius:3px"></div>
<svg class="a" style="left:686px;top:627px;" width="22" height="12" viewBox="0 0 22 12"><path d="M1 2l6 0l2 4l3-4l2 4l2-3l5 6H3z" fill="#5ab0e8"/></svg>
<div class="a" style="left:690px;top:643px;width:12px;height:2px;background:#6ab8f0;"></div>
<svg class="a" style="left:714px;top:625px;" width="18" height="18" viewBox="0 0 18 18"><path d="M3 2h10l3 3v11H3z" fill="#e8e8d0"/><path d="M4 9l4 5l3-4l4 5H4z" fill="#40a040"/><path d="M12 2l4 3l-3 3z" fill="#80c040"/></svg>
<div class="a" style="left:720px;top:643px;width:5px;height:1.5px;background:#9a9a9a;"></div>
<svg class="a" style="left:1002px;top:630px;" width="10" height="8" viewBox="0 0 10 8"><path d="M1.5 6l3.5-3.5l3.5 3.5" stroke="#e0e0e0" stroke-width="1.2" fill="none"/></svg>
<svg class="a" style="left:1020px;top:628px;" width="13" height="13" viewBox="0 0 13 13"><path d="M2.5 6A4 4 0 0 1 9.5 3.5" stroke="#e0e0e0" stroke-width="1.3" fill="none"/><path d="M9.8 1v3h-3" stroke="#e0e0e0" stroke-width="1.1" fill="none"/><path d="M10 7A4 4 0 0 1 3 9.5" stroke="#f0a030" stroke-width="1.3" fill="none"/><path d="M2.8 12v-3h3" stroke="#f0a030" stroke-width="1.1" fill="none"/><circle cx="9.5" cy="9.5" r="2.6" fill="#2a8ad8"/></svg>
<svg class="a" style="left:1039px;top:628px;" width="14" height="13" viewBox="0 0 14 13"><ellipse cx="6" cy="6" rx="5" ry="3.8" fill="#e8e8e8"/><circle cx="9" cy="8.5" r="3" fill="#2a8ad8"/><rect x="8.6" y="7.3" width="0.9" height="2.6" fill="#fff"/></svg>
<svg class="a" style="left:1059px;top:629px;" width="11" height="10" viewBox="0 0 11 10"><path d="M0.8 3.8Q5.5 -0.5 10.2 3.8M2.5 5.6Q5.5 3 8.5 5.6M4 7.4Q5.5 6.3 7 7.4" stroke="#e8e8e8" stroke-width="1" fill="none"/><circle cx="5.5" cy="8.8" r="0.9" fill="#e8e8e8"/></svg>
<svg class="a" style="left:1073px;top:629px;" width="12" height="10" viewBox="0 0 12 10"><path d="M1 3.5h2l3-2.5v8l-3-2.5H1z" fill="none" stroke="#e0e0e0" stroke-width="0.9"/><path d="M8 3.5l3 3M11 3.5l-3 3" stroke="#e0e0e0" stroke-width="0.9"/></svg>
<svg class="a" style="left:1087px;top:628px;" width="12" height="11" viewBox="0 0 12 11"><rect x="1" y="3" width="9" height="6.5" rx="1" fill="#e0e0e0"/><rect x="10" y="5" width="1.2" height="2.5" fill="#e0e0e0"/><path d="M2 3l2-2.2" stroke="#e0e0e0" stroke-width="1"/></svg>
<div class="t" style="left:1111.5px;top:626.5px;font-size:8.5px;color:#f4f4f4;font-weight:normal;transform:scaleX(0.86);">11:17 PM</div>
<div class="t" style="left:1108.5px;top:636px;font-size:8.5px;color:#f4f4f4;font-weight:normal;transform:scaleX(0.86);">11/3/2025</div>
</body></html>
